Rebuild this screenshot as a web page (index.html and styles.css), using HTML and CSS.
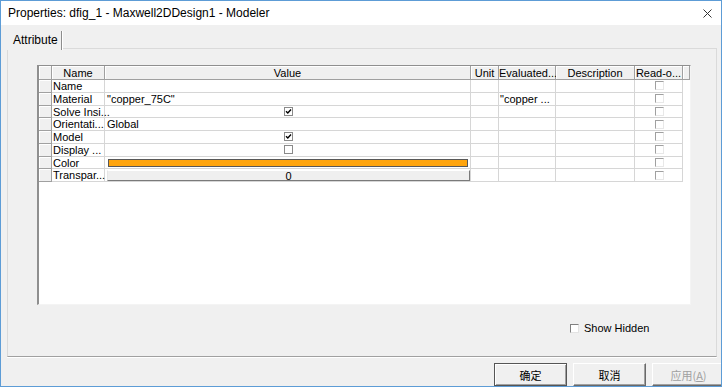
FILE: index.html
```html
<!DOCTYPE html>
<html lang="en">
<head>
    <meta charset="UTF-8">
    <title>Properties: dfig_1 - Maxwell2DDesign1 - Modeler</title>
    <link rel="stylesheet" href="styles.css">
</head>
<body>
    <div class="window">
        <div class="titlebar">
            <span class="title">Properties: dfig_1 - Maxwell2DDesign1 - Modeler</span>
            <svg class="close" viewBox="0 0 9 9"><path d="M0.5 0.5L8.5 8.5M8.5 0.5L0.5 8.5" stroke="#333" stroke-width="1"/></svg>
        </div>

        <div class="tabs">
            <div class="tab">Attribute</div>
        </div>

        <div class="panel">
            <div class="grid">
                <div class="sheet">
                    <!-- header -->
                    <div class="hd"></div>
                    <div class="hd">Name</div>
                    <div class="hd">Value</div>
                    <div class="hd">Unit</div>
                    <div class="hd">Evaluated...</div>
                    <div class="hd">Description</div>
                    <div class="hd">Read-o...</div>
                    <div class="hd"></div>

                    <div class="rh"></div>
                    <div class="cell">Name</div>
                    <div class="cell"></div>
                    <div class="cell"></div>
                    <div class="cell"></div>
                    <div class="cell"></div>
                    <div class="cell mid"><span class="ro"></span></div>
                    <div></div>

                    <div class="rh"></div>
                    <div class="cell">Material</div>
                    <div class="cell val">"copper_75C"</div>
                    <div class="cell"></div>
                    <div class="cell">"copper ...</div>
                    <div class="cell"></div>
                    <div class="cell mid"><span class="ro"></span></div>
                    <div></div>

                    <div class="rh"></div>
                    <div class="cell">Solve Insi...</div>
                    <div class="cell mid"><span class="chk"><svg viewBox="0 0 7 7"><path d="M1 3.2L2.8 5L6 1.5" stroke="#000" stroke-width="1.4" fill="none"/></svg></span></div>
                    <div class="cell"></div>
                    <div class="cell"></div>
                    <div class="cell"></div>
                    <div class="cell mid"><span class="ro"></span></div>
                    <div></div>

                    <div class="rh"></div>
                    <div class="cell">Orientati...</div>
                    <div class="cell val">Global</div>
                    <div class="cell"></div>
                    <div class="cell"></div>
                    <div class="cell"></div>
                    <div class="cell mid"><span class="ro"></span></div>
                    <div></div>

                    <div class="rh"></div>
                    <div class="cell">Model</div>
                    <div class="cell mid"><span class="chk"><svg viewBox="0 0 7 7"><path d="M1 3.2L2.8 5L6 1.5" stroke="#000" stroke-width="1.4" fill="none"/></svg></span></div>
                    <div class="cell"></div>
                    <div class="cell"></div>
                    <div class="cell"></div>
                    <div class="cell mid"><span class="ro"></span></div>
                    <div></div>

                    <div class="rh"></div>
                    <div class="cell">Display ...</div>
                    <div class="cell mid"><span class="chk"></span></div>
                    <div class="cell"></div>
                    <div class="cell"></div>
                    <div class="cell"></div>
                    <div class="cell mid"><span class="ro"></span></div>
                    <div></div>

                    <div class="rh"></div>
                    <div class="cell">Color</div>
                    <div class="cell swatch-cell"><div class="swatch"></div></div>
                    <div class="cell"></div>
                    <div class="cell"></div>
                    <div class="cell"></div>
                    <div class="cell mid"><span class="ro"></span></div>
                    <div></div>

                    <div class="rh"></div>
                    <div class="cell">Transpar...</div>
                    <div class="cell slider-cell"><div class="slider">0</div></div>
                    <div class="cell"></div>
                    <div class="cell"></div>
                    <div class="cell"></div>
                    <div class="cell mid"><span class="ro"></span></div>
                    <div></div>
                </div>
            </div>

            <label class="show-hidden"><span class="box"></span>Show Hidden</label>
        </div>

        <div class="footer">
            <button class="btn default">确定</button>
            <button class="btn">取消</button>
            <button class="btn" disabled>应用(<u>A</u>)</button>
        </div>
    </div>
</body>
</html>
```

FILE: styles.css
```css
* {
    box-sizing: border-box;
}
html, body {
    margin: 0;
    padding: 0;
}
body {
    font-family: "Liberation Sans", "Noto Sans CJK SC", sans-serif;
    font-size: 12px;
    color: #000;
    background: #fff;
}
.window {
    width: 722px;
    height: 387px;
    border: 1px solid #5d9cd6;
    background: #f0f0f0;
    overflow: hidden;
    display: flex;
    flex-direction: column;
}
.titlebar {
    height: 24px;
    flex-shrink: 0;
    background: #fff;
    display: flex;
    align-items: center;
    justify-content: space-between;
    padding: 0 9px 0 7px;
}
.close {
    width: 9px;
    height: 9px;
}
.tabs {
    height: 24px;
    flex-shrink: 0;
    padding: 6px 0 0 6px;
    display: flex;
}
.tab {
    position: relative;
    z-index: 1;
    height: 19px;
    padding: 2px 3px 0 6px;
    background: #f0f0f0;
    border-right: 1px solid #8d8d8d;
    box-shadow: 1px 0 0 #fff;
}
.panel {
    height: 309px;
    flex-shrink: 0;
    margin: -1px 4px 0 6px;
    border: 1px solid #dadada;
    border-bottom-color: #a0a0a0;
    box-shadow: 0 1px 0 #fff;
}
.grid {
    height: 240px;
    margin: 16px 25px 0 29px;
    background: #fff;
    border-top: 1px solid #8f8f8f;
    border-left: 2px solid #8f8f8f;
    border-right: 1px solid #f4f4f4;
    border-bottom: 1px solid #f4f4f4;
}
.sheet {
    display: grid;
    grid-template-columns: 13px 53px 366px 28px 57px 79px 48px 7px;
    grid-template-rows: 14px;
    grid-auto-rows: 12.75px;
    font-size: 11px;
}
.hd,
.rh {
    background: #f0f0f0;
    border-right: 1px solid #a0a0a0;
    border-bottom: 1px solid #a0a0a0;
    box-shadow: inset 1px 1px 0 #fff;
}
.hd {
    text-align: center;
    line-height: 14px;
    white-space: nowrap;
}
.cell {
    border-right: 1px solid #d6d6d6;
    border-bottom: 1px solid #d6d6d6;
    padding-left: 1px;
    line-height: 12px;
    white-space: nowrap;
}
.val {
    padding-left: 2px;
}
.mid {
    display: flex;
    align-items: center;
    justify-content: center;
}
.chk {
    width: 9px;
    height: 9px;
    border: 1px solid #8a8a8a;
    background: #fff;
    display: flex;
    align-items: center;
    justify-content: center;
}
.chk svg {
    width: 7px;
    height: 7px;
}
.ro {
    width: 9px;
    height: 9px;
    border: 1px solid;
    border-color: #a0a0a0 #e8e8e8 #e8e8e8 #a0a0a0;
    background: #fff;
}
.swatch-cell {
    padding: 2px 2px 0 3px;
}
.swatch {
    width: 360px;
    height: 8px;
    background: #ffa50e;
    border: 1px solid #585858;
}
.slider-cell {
    padding: 1px 0 0 2px;
}
.slider {
    width: 363px;
    height: 11px;
    background: #efefef;
    border: 1px solid;
    border-color: #fff #7a7a7a #7a7a7a #e6e6e6;
    text-align: center;
    line-height: 10px;
    font-size: 11px;
}
.show-hidden {
    display: flex;
    align-items: center;
    height: 16px;
    margin-top: 15px;
    padding-left: 562px;
    font-size: 11px;
}
.box {
    width: 9px;
    height: 9px;
    margin-right: 5px;
    border: 1px solid;
    border-color: #808080 #e3e3e3 #e3e3e3 #808080;
    background: #fff;
}
.footer {
    display: flex;
    gap: 6px;
    padding: 6px 0 0 493px;
}
.btn {
    flex-shrink: 0;
    width: 73px;
    height: 23px;
    padding: 0;
    font-family: "Noto Sans CJK SC", sans-serif;
    font-size: 11px;
    color: #000;
    background: #f0f0f0;
    border: 1px solid;
    border-color: #fff #696969 #696969 #fff;
    box-shadow: inset -1px -1px 0 #a0a0a0;
}
.btn.default {
    border: 1px solid #555;
    box-shadow: inset 1px 1px 0 #fff, inset -1px -1px 0 #a0a0a0;
}
.btn:disabled {
    color: #a0a0a0;
}
```
